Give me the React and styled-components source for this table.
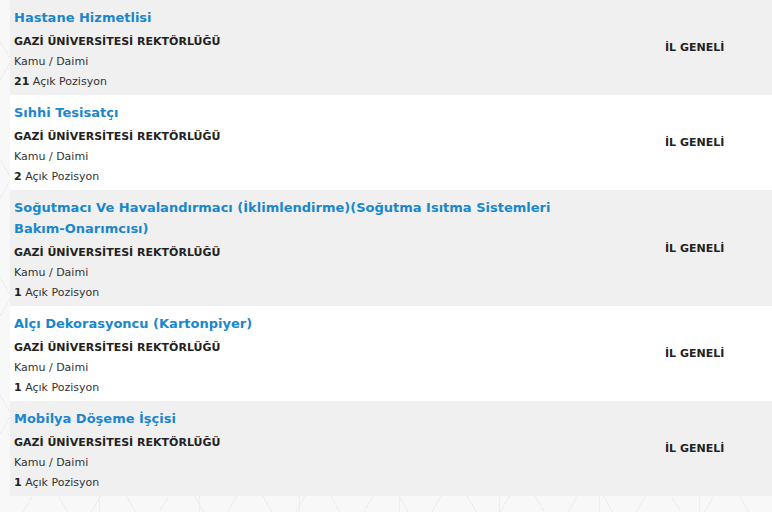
import React from "react";
import styled, { createGlobalStyle } from "styled-components";

const jobs = [
  { title: "Hastane Hizmetlisi", org: "GAZİ ÜNİVERSİTESİ REKTÖRLÜĞÜ", type: "Kamu / Daimi", count: 21, place: "İL GENELİ" },
  { title: "Sıhhi Tesisatçı", org: "GAZİ ÜNİVERSİTESİ REKTÖRLÜĞÜ", type: "Kamu / Daimi", count: 2, place: "İL GENELİ" },
  {
    title: "Soğutmacı Ve Havalandırmacı (İklimlendirme)(Soğutma Isıtma Sistemleri Bakım-Onarımcısı)",
    org: "GAZİ ÜNİVERSİTESİ REKTÖRLÜĞÜ",
    type: "Kamu / Daimi",
    count: 1,
    place: "İL GENELİ",
  },
  { title: "Alçı Dekorasyoncu (Kartonpiyer)", org: "GAZİ ÜNİVERSİTESİ REKTÖRLÜĞÜ", type: "Kamu / Daimi", count: 1, place: "İL GENELİ" },
  { title: "Mobilya Döşeme İşçisi", org: "GAZİ ÜNİVERSİTESİ REKTÖRLÜĞÜ", type: "Kamu / Daimi", count: 1, place: "İL GENELİ" },
];

const GlobalStyle = createGlobalStyle`
  html, body {
    margin: 0;
    padding: 0;
  }
  body {
    font-family: "DejaVu Sans", Verdana, sans-serif;
    background-color: #f8f8f8;
    background-image:
      repeating-linear-gradient(60deg, transparent 0 58px, #eeeeee 58px 59px),
      repeating-linear-gradient(-60deg, transparent 0 58px, #eeeeee 58px 59px),
      repeating-linear-gradient(90deg, transparent 0 99px, #eeeeee 99px 100px);
    min-height: 512px;
  }
`;

const Page = styled.div`
  padding-left: 10px;
  min-height: 512px;
`;

const List = styled.ul`
  list-style: none;
  margin: 0;
  padding: 0;
`;

const Row = styled.li`
  display: grid;
  grid-template-columns: 1fr 107px;
  align-items: center;
  background: ${(p) => (p.$alt ? "#ffffff" : "#f0f0f0")};
  padding: 7px 0 3px 4px;
`;

const Info = styled.div`
  display: flex;
  flex-direction: column;
  max-width: 575px;
`;

const Title = styled.a`
  color: #1a87cc;
  font-size: 13px;
  font-weight: bold;
  line-height: 21px;
  margin-bottom: 4px;
  text-decoration: none;
  cursor: pointer;
`;

const Org = styled.div`
  color: #222;
  font-size: 11px;
  font-weight: bold;
  line-height: 20px;
`;

const Meta = styled.div`
  color: #333;
  font-size: 11px;
  line-height: 20px;
  b {
    color: #222;
  }
`;

const Place = styled.div`
  color: #222;
  font-size: 11px;
  font-weight: bold;
  margin-bottom: 4px;
`;

export default function App() {
  return (
    <>
      <GlobalStyle />
      <Page>
        <List>
          {jobs.map((j, i) => (
            <Row key={i} $alt={i % 2 === 1}>
              <Info>
                <Title>{j.title}</Title>
                <Org>{j.org}</Org>
                <Meta>{j.type}</Meta>
                <Meta>
                  <b>{j.count}</b> Açık Pozisyon
                </Meta>
              </Info>
              <Place>{j.place}</Place>
            </Row>
          ))}
        </List>
      </Page>
    </>
  );
}
